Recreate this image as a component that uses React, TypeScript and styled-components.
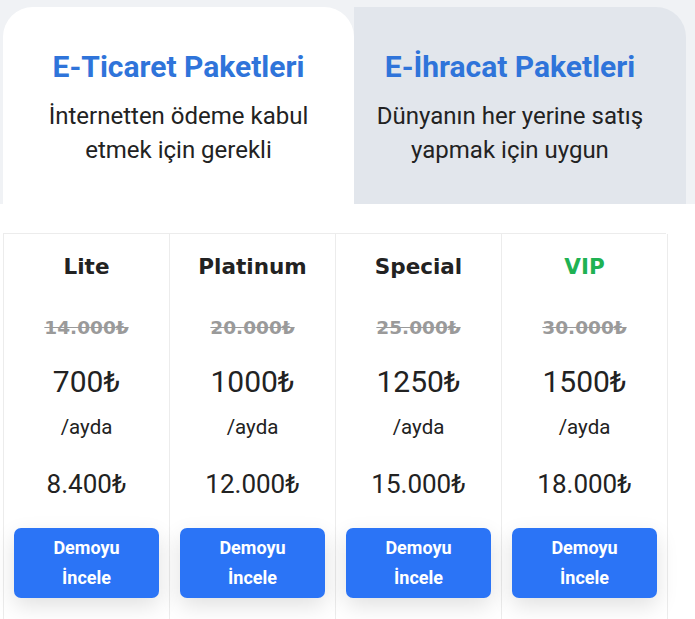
import React from "react";
import styled, { createGlobalStyle } from "styled-components";

const Global = createGlobalStyle`
  html, body { margin: 0; padding: 0; background: #ffffff; }
  body { font-family: Roboto, "Liberation Sans", sans-serif; }
`;

const Page = styled.div`
  width: 695px;
  overflow: hidden;
`;

const TabBar = styled.div`
  background: #f0f2f5;
  height: 204px;
  box-sizing: border-box;
  padding: 7px 9px 0 3px;
  display: grid;
  grid-template-columns: 351px 332px;
`;

const Tab = styled.div<{ $active?: boolean }>`
  background: ${(p) => (p.$active ? "#ffffff" : "#e2e6ec")};
  border-radius: ${(p) => (p.$active ? "30px 30px 0 0" : "0 30px 0 0")};
  display: flex;
  flex-direction: column;
  align-items: center;
  padding: 43px ${(p) => (p.$active ? "0" : "20px")} 0 0;
  box-sizing: border-box;
`;

const TabTitle = styled.div`
  font-family: Roboto, sans-serif;
  font-weight: 700;
  font-size: 30px;
  color: #2f74da;
  line-height: 34px;
`;

const TabSub = styled.div`
  margin-top: 15px;
  font-family: Roboto, sans-serif;
  font-size: 24px;
  line-height: 34px;
  color: #222;
  text-align: center;
`;

const Body = styled.div`
  padding: 29px 0 0 3px;
`;

const Table = styled.div`
  width: 663px;
  display: grid;
  grid-template-columns: repeat(4, 1fr);
  border-top: 1px solid #ececec;
  border-left: 1px solid #ececec;
  box-sizing: border-box;
`;

const Col = styled.div`
  border-right: 1px solid #ececec;
  display: flex;
  flex-direction: column;
  align-items: center;
  padding: 0 10px 30px;
`;

const PlanName = styled.div<{ $green?: boolean }>`
  margin-top: 20px;
  font-family: "DejaVu Sans", sans-serif;
  font-weight: 700;
  font-size: 21.5px;
  line-height: 26px;
  color: ${(p) => (p.$green ? "#1fb253" : "#222")};
`;

const OldPrice = styled.div`
  margin-top: 36px;
  font-family: "DejaVu Sans", sans-serif;
  font-weight: 700;
  font-size: 18.5px;
  line-height: 24px;
  color: #9a9a9a;
  text-decoration: line-through;
`;

const Price = styled.div`
  margin-top: 24px;
  font-size: 30px;
  line-height: 36px;
  color: #222;
`;

const Per = styled.div`
  margin-top: 15px;
  font-size: 20.5px;
  line-height: 24px;
  color: #222;
`;

const Total = styled.div`
  margin-top: 30px;
  font-size: 26px;
  line-height: 30px;
  color: #222;
`;

const Button = styled.button`
  margin-top: 29px;
  width: 145px;
  height: 70px;
  border: none;
  border-radius: 7px;
  background: #2b74f6;
  color: #fff;
  font-family: Roboto, sans-serif;
  font-weight: 700;
  font-size: 18px;
  line-height: 30px;
  box-shadow: 0 8px 22px rgba(0, 0, 0, 0.12);
  padding: 4px 10px;
  cursor: pointer;
`;

const plans = [
  { name: "Lite", old: "14.000₺", price: "700₺", total: "8.400₺" },
  { name: "Platinum", old: "20.000₺", price: "1000₺", total: "12.000₺" },
  { name: "Special", old: "25.000₺", price: "1250₺", total: "15.000₺" },
  { name: "VIP", old: "30.000₺", price: "1500₺", total: "18.000₺", green: true },
];

export default function App() {
  return (
    <Page>
      <Global />
      <TabBar>
        <Tab $active>
          <TabTitle>E-Ticaret Paketleri</TabTitle>
          <TabSub>
            İnternetten ödeme kabul
            <br />
            etmek için gerekli
          </TabSub>
        </Tab>
        <Tab>
          <TabTitle>E-İhracat Paketleri</TabTitle>
          <TabSub>
            Dünyanın her yerine satış
            <br />
            yapmak için uygun
          </TabSub>
        </Tab>
      </TabBar>
      <Body>
        <Table>
          {plans.map((p) => (
            <Col key={p.name}>
              <PlanName $green={p.green}>{p.name}</PlanName>
              <OldPrice>{p.old}</OldPrice>
              <Price>{p.price}</Price>
              <Per>/ayda</Per>
              <Total>{p.total}</Total>
              <Button>
                Demoyu
                <br />
                İncele
              </Button>
            </Col>
          ))}
        </Table>
      </Body>
    </Page>
  );
}
